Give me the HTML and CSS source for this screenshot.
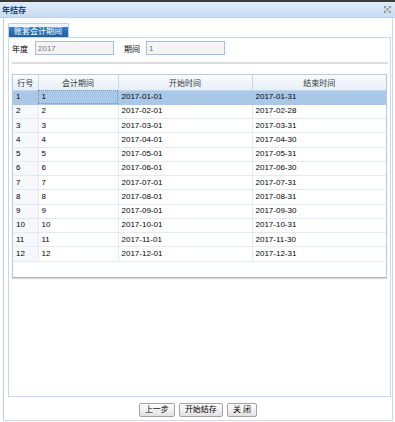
FILE: index.html
```html
<!DOCTYPE HTML>
<html lang="zh-CN">
<head>
    <meta charset="UTF-8">
    <title>年结存</title>
    <link rel="stylesheet" href="styles.css">
</head>
<body>
    <div class="topbar"></div>
    <div class="win-title">
        <span class="win-text">年结存</span>
        <svg class="win-close" width="7" height="7" viewBox="0 0 7 7">
            <rect x="0" y="0" width="2" height="2" fill="#9a9a9a"/>
            <rect x="5" y="0" width="2" height="2" fill="#9a9a9a"/>
            <rect x="2" y="2" width="3" height="3" fill="#b0b0b0"/>
            <rect x="0" y="5" width="2" height="2" fill="#9a9a9a"/>
            <rect x="5" y="5" width="2" height="2" fill="#9a9a9a"/>
            <rect x="2" y="0" width="3" height="1" fill="#d0d0d0"/>
            <rect x="2" y="6" width="3" height="1" fill="#d0d0d0"/>
            <rect x="0" y="2" width="1" height="3" fill="#d0d0d0"/>
            <rect x="6" y="2" width="1" height="3" fill="#d0d0d0"/>
        </svg>
    </div>

    <div class="win-body">
        <div class="tabs">
            <div class="tab"><span class="tab-inner">账套会计期间</span></div>
        </div>
        <div class="tab-panel">
            <div class="form-row">
                <label class="lbl" for="year">年度</label>
                <input class="txt" type="text" id="year" value="2017" readonly />
                <label class="lbl lbl-period" for="period">期间</label>
                <input class="txt" type="text" id="period" value="1" readonly />
            </div>
            <div class="sep"></div>

            <div class="grid">
                <table>
                    <colgroup>
                        <col class="c-no" />
                        <col class="c-period" />
                        <col class="c-date" />
                        <col class="c-date" />
                    </colgroup>
                    <thead>
                        <tr>
                            <th>行号</th>
                            <th>会计期间</th>
                            <th>开始时间</th>
                            <th>结束时间</th>
                        </tr>
                    </thead>
                    <tbody id="rows"></tbody>
                </table>
            </div>
        </div>

        <div class="buttons">
            <button class="btn" type="button">上一步</button>
            <button class="btn" type="button">开始结存</button>
            <button class="btn" type="button">关 闭</button>
        </div>
    </div>

    <script type="text/javascript">
    var ends = ['31', '28', '31', '30', '31', '30', '31', '31', '30', '31', '30', '31'];
    var body = document.getElementById('rows'),
        html = '';

    function pad(n) {
        return n < 10 ? '0' + n : '' + n;
    }

    for (var i = 1; i <= 12; i++) {
        html += '<tr' + (i == 1 ? ' class="sel"' : '') + '>' +
            '<td class="rn">' + i + '</td>' +
            '<td' + (i == 1 ? ' class="focus"' : '') + '>' + i + '</td>' +
            '<td>2017-' + pad(i) + '-01</td>' +
            '<td>2017-' + pad(i) + '-' + ends[i - 1] + '</td>' +
            '</tr>';
    }
    body.innerHTML = html;
    </script>
</body>
</html>
```

FILE: styles.css
```css
html, body {
    margin: 0;
    padding: 0;
}

body {
    width: 395px;
    height: 422px;
    overflow: hidden;
    background: #fff;
    font-family: "Liberation Sans", "Noto Sans CJK SC", sans-serif;
    font-size: 8px;
    color: #000;
}

.topbar {
    height: 2px;
    background: #3a3a3a;
}

.win-title {
    height: 15px;
    display: flex;
    align-items: center;
    justify-content: space-between;
    padding: 0 4px 0 2px;
    background: linear-gradient(#dfebf9, #c8dcf3);
    border-bottom: 1px solid #b9d1ec;
}

.win-text {
    font-weight: bold;
    color: #15428b;
    font-size: 8px;
}

.win-close {
    display: block;
}

.win-body {
    margin: 0 2px 0 3px;
    height: 403px;
    box-sizing: border-box;
    border-left: 1px solid #b7d0ea;
    border-right: 1px solid #c9dcef;
    border-bottom: 1px solid #c9dcef;
    padding: 4px 0 0 4px;
}

.tabs {
    display: flex;
    height: 15px;
}

.tab {
    width: 61px;
    height: 14px;
    margin-top: 1px;
    border: 1px solid #b3d0ee;
    border-bottom: none;
    border-radius: 2px 2px 0 0;
    padding: 3px 0 0 0;
    box-sizing: border-box;
    background: #eef5fc;
}

.tab-inner {
    display: block;
    height: 10px;
    line-height: 10px;
    padding: 0 5px;
    background: linear-gradient(#3b7fc2, #1d5f9f);
    color: #fff;
    white-space: nowrap;
}

.tab-panel {
    width: 383px;
    height: 360px;
    box-sizing: border-box;
    border: 1px solid #c3d9ef;
    padding: 3px 3px 0 3px;
}

.form-row {
    display: flex;
    align-items: center;
    height: 14px;
}

.lbl {
    width: 23px;
    white-space: nowrap;
}

.lbl-period {
    margin-left: 10px;
    width: 22px;
}

.txt {
    width: 79px;
    height: 14px;
    box-sizing: border-box;
    margin: 0;
    padding: 0 2px;
    border: 1px solid #a6c0dc;
    background: #f4f4f4;
    color: #7a7a7a;
    font-family: inherit;
    font-size: 8px;
    outline: none;
}

.sep {
    height: 2px;
    background: #dcdcdc;
    margin: 7px 0 0 0;
    width: 376px;
}

.grid {
    margin: 10px 0 0 0;
    width: 375px;
    height: 204px;
    box-sizing: border-box;
    border: 1px solid #bccbdb;
    border-bottom-color: #a9b4bf;
    box-shadow: 0 1px 1px #d8dde2;
    background: #fff;
}

.grid table {
    border-collapse: collapse;
    table-layout: fixed;
    width: 373px;
}

.c-no { width: 25px; }
.c-period { width: 80px; }
.c-date { width: 134px; }

.grid th {
    height: 15px;
    padding: 0;
    font-weight: normal;
    color: #2d3a3a;
    background: linear-gradient(#fbfcfe, #e6eef7);
    border-left: 1px solid #c9d8e8;
    border-bottom: 1px solid #c5d6e8;
    text-align: center;
    box-sizing: border-box;
}

.grid th:first-child {
    border-left: none;
}

.grid td {
    height: 14.25px;
    padding: 0 0 0 3px;
    border-left: 1px solid #e2ebf5;
    border-bottom: 1px solid #e2ebf5;
    white-space: nowrap;
    box-sizing: border-box;
    line-height: 12px;
}

.grid td:first-child {
    border-left: none;
    background: #f6f8fb;
}

.grid tr.sel td {
    background: #a9c8e7;
    border-color: #a9c8e7;
}

.grid tr.sel td.focus {
    outline: 1px dotted #6f93bd;
    outline-offset: -1px;
}

.buttons {
    display: flex;
    justify-content: center;
    gap: 4px;
    margin: 6px 0 0 -4px;
}

.btn {
    height: 14px;
    margin: 0;
    padding: 0 5px;
    border: 1px solid #a3a3a3;
    border-radius: 2px;
    background: linear-gradient(#ffffff, #e2e2e2);
    font-family: inherit;
    font-size: 8px;
    color: #000;
    line-height: 12px;
}
```
